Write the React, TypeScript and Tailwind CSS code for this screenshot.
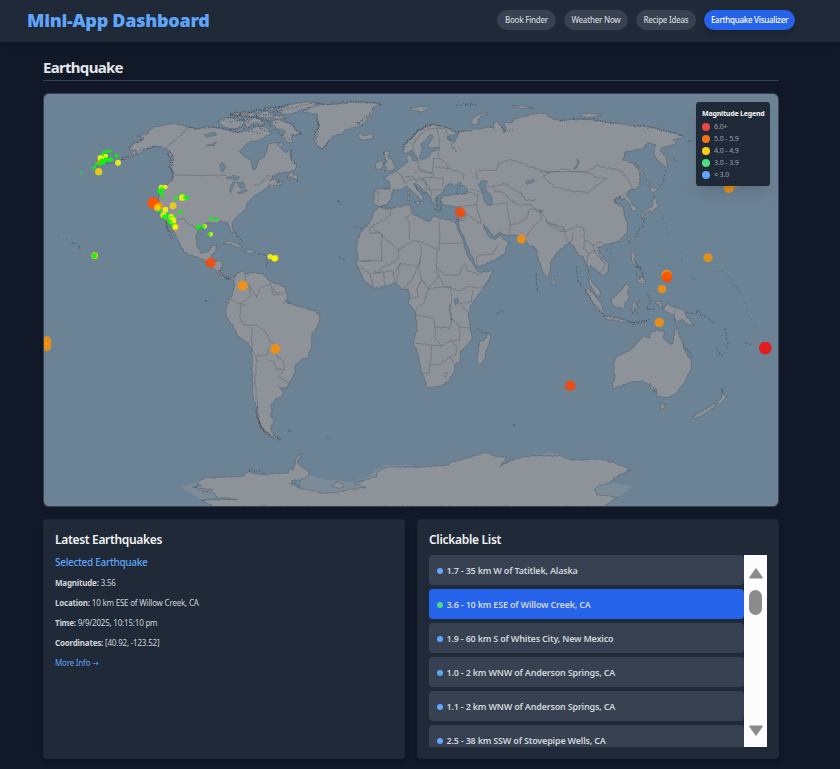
import React from "react";

// A trace is a run of points in thirds of a pixel, measured from an anchor on the page.
type Run = [number, number, string];
type Pt = [number, number];

const A: Pt = [40, 90];
const B: Pt = [230, 90];
const C: Pt = [160, 270];
const E: Pt = [350, 90];
const F: Pt = [540, 90];
const H: Pt = [350, 220];
const I: Pt = [540, 270];

const at = (o: Pt, pts: string): Run => [o[0], o[1], pts];

function points(runs: Run[]): Pt[] {
  const out: Pt[] = [];
  runs.forEach(([ox, oy, s]) =>
    s.trim().split(/\s+/).forEach((p) => {
      const [x, y] = p.split(",").map(Number);
      out.push([ox + x / 3, oy + y / 3]);
    })
  );
  return out;
}

function noise(n: number) {
  const v = Math.sin(n * 127.1 + 11.7) * 43758.5453;
  return v - Math.floor(v) - 0.5;
}

// Breaks each edge into short uneven steps so coasts look ragged.
function rough(runs: Run[], closed: boolean, amp: number) {
  const p = points(runs);
  let d = "";
  const n = closed ? p.length : p.length - 1;
  for (let i = 0; i < n; i++) {
    const a = p[i];
    const b = p[(i + 1) % p.length];
    const len = Math.hypot(b[0] - a[0], b[1] - a[1]);
    const steps = Math.max(1, Math.round(len / 1.8));
    for (let k = 0; k < steps; k++) {
      const t = k / steps;
      const j = k === 0 ? 0 : amp;
      const x = a[0] + (b[0] - a[0]) * t + noise(i * 31 + k + a[0]) * j;
      const y = a[1] + (b[1] - a[1]) * t + noise(i * 17 + k * 3 + a[1]) * j;
      d += (d ? "L" : "M") + x.toFixed(1) + " " + y.toFixed(1);
    }
  }
  if (closed) return d + "Z";
  const e = p[p.length - 1];
  return d + "L" + e[0].toFixed(1) + " " + e[1].toFixed(1);
}

const land: Run[][] = [
  // North and Central America
  [
    at(A, "268,178 280,160 305,152 312,143 292,138 325,130 330,118 365,106 395,101 415,104 450,113 480,115 510,110 550,117 575,124 600,126 630,118 655,108 680,112 690,124"),
    at(B, "125,128 105,140 88,150 60,155 42,168 28,185 42,198 63,210 66,232 74,240 80,228 86,210 104,200 110,182 114,165 130,158 148,160 155,178 166,188 180,180 182,208 200,224 195,240 172,246 148,248 132,258 118,272 135,268 142,276 160,278 124,293 118,284 100,303 72,318 52,338 48,358 15,385 6,400 9,430 2,425 -4,402"),
    at(A, "558,396 540,393 530,402 500,398 478,412 468,440 470,465 485,490 505,485 515,467 532,465 527,485 515,495 518,512 545,512 547,525 540,540 550,560 565,565 580,558 585,572 572,566 550,568 530,545 515,527 490,508 465,500 430,485 422,465 412,445 398,420 386,398 376,392 382,414 398,445 392,444 378,415 372,390 362,372 355,345 358,315 362,295 380,285 398,268 402,245 388,228 396,205 386,190 380,175 350,168 320,175 300,190 270,203 242,210 262,197 290,182"),
  ],
  // South America
  [at(C, "222,25 235,8 250,2 255,12 280,8 310,12 330,35 350,42 375,50 382,75 378,95 400,105 430,112 460,122 478,135 478,155 465,180 455,190 455,230 443,262 425,268 405,285 405,305 385,345 375,355 358,350 370,368 365,380 345,388 340,402 332,405 335,425 332,435 343,452 335,465 333,480 345,498 362,508 345,508 320,495 300,470 292,440 290,410 280,385 278,330 276,270 275,235 265,220 235,200 220,170 200,140 197,125 205,90 218,70 224,45")],
  // Greenland
  [at(B, "218,65 245,52 275,43 305,45 355,36 425,38 455,42 430,52 430,66 412,85 402,100 385,110 350,118 335,130 310,138 290,160 278,176 262,168 252,150 255,130 268,110 262,90 262,72 240,70")],
  // Europe and Asia
  [
    at(E, "158,185 160,165 185,145 200,125 225,112 250,103 285,112 320,125 316,134 298,137 290,145 312,158 325,130 345,120 360,125 375,115 385,118 410,112 432,115 430,98 440,92 455,110 460,128 468,120 462,100 485,98 495,85 525,78 565,70"),
    at(F, "0,68 20,72 35,85 60,92 90,87 110,90 150,88 190,95 230,100 290,108 340,112 380,122 430,138 420,145 400,150 410,158 385,168 365,172 360,180 380,205 382,235 350,210 342,190 348,165 330,158 315,165 310,178 285,180 255,185 248,210 275,218 298,240 300,285 288,298 272,300 258,318 268,320 275,340 290,355 288,362 275,360 270,342 255,325 245,330 240,318 220,330 235,342 248,350 252,370 262,400 260,430 245,445 225,458 200,462 190,468 172,472 190,505 205,520 205,540 190,558 175,545 162,535 152,525 146,548 155,575 170,590 180,605 180,622 165,610 150,585 145,560 142,530 130,500 117,497 105,475 90,458 75,465 50,490 32,515 30,545 24,566 12,550 0,518"),
    at(E, "560,480 550,468 535,465 525,440 490,435 460,435 450,425 430,440 415,418 400,402 404,418 418,440 435,450 450,435 475,458 465,490 430,512 382,532 370,510 345,450 330,418 325,400 330,370 325,350 300,348 278,345 272,325 290,316 320,312 345,312 352,300 330,285 332,276 308,288 300,280 285,290 278,308 262,318 255,325 262,348 250,342 240,320 225,305 205,285 192,280 200,298 220,322 210,336 206,322 185,302 170,288 155,298 130,298 125,320 110,345 88,350 72,340 75,298 100,295 120,298 118,275 100,262 130,250 150,235 165,222 175,215 170,200 185,196 188,212 205,212 202,203 192,190 182,182 168,190"),
  ],
  // Africa
  [
    at(E, "88,350 75,362 65,385 50,410 30,430 22,450 20,480 25,500 18,520 30,545 45,575"),
    at(H, "75,205 110,198 135,190 150,200 155,208 175,205 180,225 175,250 195,275 202,320 190,370 205,405 215,455 228,490 232,503 275,498 300,475 315,450 315,432 332,425 330,395 345,380 365,358 362,325 355,290 360,260 385,225 415,185 430,150 392,158"),
    at(E, "384,546 365,515 350,490 340,455 325,420 312,395 325,388 300,392 270,385 250,378 240,395 215,385 185,370 182,345 140,350 110,358"),
  ],
  // Madagascar, Australia and Oceania
  [at(H, "418,338 422,355 400,425 390,433 380,425 385,400 388,365 405,358")],
  [at(I, "228,262 250,250 275,238 290,218 310,198 330,205 335,185 350,180 373,183 370,205 390,222 400,218 405,180 410,172 418,200 428,215 430,235 455,275 453,300 435,335 405,375 385,382 350,380 348,355 335,360 330,345 310,333 280,335 240,348 220,355 218,345 225,320 220,285")],
  [at(I, "360,402 378,402 372,415 361,420")],
  [at(I, "545,358 552,375 562,378 540,402 532,398 545,382")],
  [at(I, "525,400 528,408 490,434 462,447 458,440 490,422")],
  [at(I, "344,96 362,95 370,115 380,102 405,110 432,122 440,140 464,168 440,160 425,148 410,157 398,132 375,122")],
  [at(I, "213,85 225,80 240,65 258,40 270,50 262,65 268,80 255,98 250,117 220,108")],
  [at(I, "130,48 150,60 185,102 192,130 178,125 150,85")],
  [at(I, "190,137 220,140 250,148 285,158 255,156 200,148")],
  [at(I, "278,98 300,92 284,102 296,112 288,115 294,130 286,126 284,112 278,132 276,112")],
  // Japan, Sakhalin, Philippines and neighbours
  [at(F, "342,318 350,330 354,352 338,362 322,366 312,374 306,388 300,378 322,358 338,346")],
  [at(F, "330,290 355,298 342,308 332,304")],
  [at(F, "285,218 298,230 310,255 328,285 322,285 302,250")],
  [at(F, "266,436 272,445 268,460 263,450")],
  [at(F, "200,478 212,478 206,488")],
  [at(F, "273,486 283,488 282,510 300,532 290,530 274,512")],
  [at(F, "292,572 305,560 316,570 312,585 300,580")],
  [at(F, "35,556 47,574 38,585")],
  // British Isles and Iceland
  [at(B, "462,185 480,184 474,198 486,212 496,232 488,240 462,243 472,232 464,228 472,216 462,206")],
  [at(B, "438,220 450,210 459,218 456,234 438,238")],
  [at(B, "383,138 392,132 402,137 428,132 432,142 408,151 390,147")],
  // Arctic islands
  [at(B, "118,96 145,88 165,96 185,102 196,120 215,130 195,138 182,134 188,158 172,156 156,142 166,124 140,116")],
  [at(B, "140,60 175,45 230,36 272,40 240,52 205,62 185,74 160,72")],
  [at(B, "0,70 30,66 42,74 20,80")],
  [at(B, "40,98 58,92 68,104 52,114")],
  [at(B, "74,92 98,90 104,104 86,108")],
  [at(B, "104,80 150,76 170,84 140,88")],
  [at(B, "100,52 128,50 134,58 108,60")],
  [at(A, "533,96 556,82 590,84 612,96 606,112 580,118 550,110")],
  [at(A, "612,88 640,82 668,90 660,102 630,104")],
  [at(A, "575,72 610,66 640,70 655,80 620,80")],
  [at(B, "75,74 105,64 135,70 128,82 96,86")],
  [at(B, "150,158 162,162 154,170 142,166")],
  [at(E, "360,100 375,78 412,66 414,70 384,86 388,102 370,102")],
  [at(E, "184,54 205,50 240,48 232,58 210,66 192,62")],
  [at(E, "486,46 510,46 552,55 520,56")],
  [at(F, "120,73 145,70 184,74 160,82 132,80")],
  [at(B, "170,262 185,243 190,254 203,256 203,271 188,266")],
  [at(A, "550,461 566,452 590,460 608,472 590,472 572,462")],
  [at(A, "612,486 626,477 646,488 628,491")],
  // Sicily, Sardinia, Corsica, Crete, Cyprus
  [at(E, "192,336 210,336 206,345")],
  [at(E, "172,318 180,318 179,332 173,332")],
  [at(E, "174,302 179,303 178,314 174,312")],
  [at(E, "252,358 275,360 270,363")],
  // Antarctica
  [
    at(C, "165,710 122,690 232,688 172,682 164,670 125,664 160,660 100,652 125,648 110,640 130,625 245,619 265,605 290,613 385,610 388,595 400,600 410,560 425,550 412,580 445,605 445,618 425,628 395,632 395,642 420,655 500,671 618,652 582,640 630,626 650,620 655,604 690,590 778,592"),
    at(H, "230,740 290,735 310,725 345,716 405,697 435,708 470,712 450,740 500,715 570,705"),
    at(I, "0,557 65,558 90,570 180,567 225,580 272,600 235,615 205,640 175,648 163,658 170,675 232,682 190,710"),
  ],
  [at(C, "515,650 530,636 548,640 550,654 532,654")],
];

const water: Run[][] = [
  [at(E, "216,180 214,160 230,146 240,135 250,138 244,150 233,165 245,174 268,172 262,180 245,184 240,198 222,208 208,206")],
  [at(E, "384,284 398,271 414,274 404,286 412,305 426,318 427,345 412,346 402,336 400,312")],
  [at(E, "318,312 325,290 340,285 354,300 350,312")],
  [at(F, "100,237 112,222 112,206 119,218 108,236")],
  [at(H, "312,238 325,235 326,248 316,255")],
  [at(A, "558,265 578,256 600,262 590,270")],
  [at(A, "578,276 586,274 572,308 568,300")],
  [at(A, "590,276 608,276 616,290 604,298 596,290")],
  [at(A, "592,308 620,298 622,303 598,312")],
  [at(A, "540,222 548,218 556,228 550,246 542,242")],
  [at(A, "492,134 525,127 530,134 500,142")],
  [at(A, "498,168 530,156 522,168")],
  [at(E, "527,275 552,268 553,274 532,284")],
];

const shelves: Run[][] = [
  [at(C, "65,652 128,628 100,652 160,660 170,680 122,690")],
  [at(C, "420,655 425,630 445,615 500,630 585,636 620,652 500,671")],
  [at(C, "552,640 590,630 630,618 645,602 662,592 655,604 650,620")],
  [at(H, "60,775 80,752 110,735 200,736 105,744 85,770")],
  [at(I, "165,652 205,640 280,648 232,682 170,675")],
  [at(I, "0,555 25,545 70,558")],
];

const borders: Run[][] = [
  [at(A, "380,172 448,112")],
  [at(A, "402,256 552,256 570,262")],
  [at(A, "386,384 412,390 430,385 445,402 458,406 470,420")],
  [at(B, "74,286 88,284 100,270 118,262")],
  [at(C, "255,15 255,40 270,50 270,80 245,100 240,140 250,165 290,165 325,195 330,215 345,220")],
  [at(C, "270,50 290,82 300,55 330,40 340,75 378,70")],
  [at(C, "205,85 235,100 262,105")],
  [at(C, "275,175 276,240 290,260 285,330 292,410 300,470 330,495")],
  [at(C, "290,258 320,255 325,235 345,238 348,255 372,275 372,300 348,298 345,280 322,268")],
  [at(C, "372,300 358,318 385,340")],
  [at(C, "340,50 345,70 360,65")],
  // Europe
  [at(E, "118,298 100,295")],
  [at(E, "76,304 86,306 84,335")],
  [at(E, "140,245 160,262 162,280 185,268 215,270 225,262 250,262 280,265 278,290")],
  [at(E, "205,215 205,235 215,245 245,250 250,228 250,205 270,205 290,220 295,235 255,232")],
  [at(E, "192,248 220,240 250,250 240,265")],
  [at(E, "295,235 340,252 340,268")],
  [at(E, "190,190 188,165 205,140 230,118 262,115 268,165 265,200")],
  [at(E, "262,115 285,115 300,150")],
  [at(E, "205,262 230,275 228,300 245,300 280,298")],
  [at(E, "218,275 240,290 245,320")],
  [at(E, "165,262 190,260 200,275")],
  [at(E, "350,305 385,315 380,345 392,400 375,390 350,370 330,378")],
  [at(E, "378,345 325,350")],
  [at(E, "380,532 380,500 430,490 445,462")],
  [at(E, "350,370 340,392 325,395 345,375")],
  [at(E, "360,298 385,302 400,310")],
  // Central and East Asia
  [at(E, "385,272 376,250 385,240 440,240 445,222 480,208 520,220 540,230 565,238 600,250")],
  [at(E, "405,290 430,288 435,305 460,308 480,330 510,345 545,345 565,365 580,360")],
  [at(E, "430,288 470,280 490,300 515,310 525,330 560,330")],
  [at(E, "428,345 470,338 475,370 480,405 505,400 530,385 540,355 580,365")],
  [at(E, "480,405 478,435")],
  [at(E, "530,440 550,410 575,385 570,360")],
  [at(F, "0,245 50,245 70,235 100,245 140,245 175,225 185,232 240,240 265,270 275,290 280,300")],
  [at(F, "10,258 40,290 100,305 145,308 165,290 180,280 200,265 170,262 150,250 100,245 35,245 10,258")],
  [at(F, "0,358 20,395 60,415 80,425 110,408 130,415 135,450 160,465 180,455 190,465")],
  [at(F, "20,400 50,420 75,425 72,412 45,405 20,398")],
  [at(F, "75,425 80,455 95,455 100,430")],
  [at(F, "135,450 130,475 145,490 140,520 148,540")],
  [at(F, "145,490 170,480 195,520 185,545")],
  [at(F, "160,465 165,490 190,515")],
  [at(F, "245,318 275,298")],
  // Africa
  [at(E, "88,350 122,352 122,375 100,390 60,412 60,430 95,430 95,512 32,512")],
  [at(E, "70,415 145,480 195,450 268,480 268,460 268,388")],
  [at(E, "182,372 168,385 178,400 180,450")],
  [at(E, "268,460 340,460")],
  [at(E, "145,480 145,505 120,525 100,530 85,550 72,545")],
  [at(E, "200,455 215,475 210,520 200,528 150,520 130,555")],
  [at(E, "262,480 260,530 285,555 325,555 345,520")],
  [at(E, "345,520 350,540 385,555")],
  [at(H, "62,120 45,125 20,120")],
  [at(H, "20,140 42,148 60,160 68,200")],
  [at(H, "68,160 100,155 105,198")],
  [at(H, "100,155 130,155 135,188")],
  [at(H, "150,130 145,160 140,188")],
  [at(H, "160,205 185,180 205,140 210,120")],
  [at(H, "205,140 215,180 235,205 265,170 260,140")],
  [at(H, "215,180 200,210 205,230 180,235")],
  [at(H, "235,205 225,245 200,265 195,275")],
  [at(H, "235,205 300,200 305,240 300,270 305,300 300,325 255,322 250,295 200,285")],
  [at(H, "265,165 285,200 330,212 350,200 395,205 415,180")],
  [at(H, "370,210 365,245 330,250")],
  [at(H, "330,255 355,275")],
  [at(H, "300,295 330,320 362,325")],
  [at(H, "328,320 330,360 300,362 275,378 245,375 190,370")],
  [at(H, "245,375 240,435 238,458 215,460")],
  [at(H, "240,435 275,430 300,410 318,405 320,378 300,362")],
  [at(H, "300,410 310,430")],
  [at(H, "279,464 285,457 293,462 288,472 280,470")],
  [at(H, "255,322 255,355 275,378")],
  [at(I, "404,110 404,154")],
];

// Rugged coasts drawn as loose dark specks.
const specks: Run[][] = [
  [at(A, "390,185 400,205 392,230 402,260 395,268")],
  [at(A, "384,190 392,215 386,235")],
  [at(A, "388,180 398,195 398,225 394,245")],
  [at(A, "245,208 275,198 300,186")],
  [at(A, "250,204 285,190 318,176 350,170")],
  [at(A, "268,176 282,160 306,150")],
  [at(A, "232,212 205,220 180,224 165,232")],
  [at(A, "96,460 108,462")],
  [at(A, "116,470 123,482")],
  [at(A, "585,425 592,440 602,448 612,458")],
  [at(A, "655,492 675,495 681,505 680,530")],
  [at(A, "540,540 552,560 570,570")],
  [at(A, "375,395 384,418 396,442")],
  [at(A, "570,76 620,70 670,60 750,45")],
  [at(A, "535,96 570,84 612,92 640,84 690,90")],
  [at(A, "450,113 480,117 520,112 560,120 600,127")],
  [at(A, "600,74 640,78 690,70 730,62")],
  [at(B, "0,72 50,68 90,60 140,50 185,42")],
  [at(B, "0,95 40,88 70,100 110,92 140,100")],
  [at(B, "20,76 60,80 90,84 120,72 160,78")],
  [at(B, "30,100 60,112 85,108 115,100 125,112")],
  [at(B, "90,115 120,125 140,120 160,140 180,150")],
  [at(B, "0,118 30,110 50,122 95,130")],
  [at(B, "165,96 190,104 200,122 214,130 190,138")],
  [at(B, "140,62 180,56 220,46 270,40")],
  [at(B, "262,85 270,105 256,130 258,160")],
  [at(B, "266,92 264,110 262,140 254,150")],
  [at(B, "262,168 278,176 292,158")],
  [at(B, "428,55 418,75 400,85 380,105")],
  [at(B, "412,82 392,94 376,98 398,104")],
  [at(B, "275,43 310,40 360,35 420,38 455,42")],
  [at(B, "110,258 130,256 150,278 122,290")],
  [at(B, "184,180 184,210 200,225")],
  [at(B, "172,262 190,264 204,270")],
  [at(B, "322,333 340,342")],
  [at(B, "376,412 400,412")],
  [at(B, "328,500 342,514")],
  [at(B, "460,188 466,208 462,218")],
  [at(E, "160,180 163,163 188,143 203,122 228,108 250,102 268,106")],
  [at(E, "158,170 180,150 196,128 220,112 245,104")],
  [at(E, "190,282 210,300 226,312")],
  [at(E, "255,330 265,350 278,355")],
  [at(E, "262,322 272,335 276,350")],
  [at(E, "318,46 350,42 388,45")],
  [at(E, "345,45 370,44")],
  [at(E, "270,108 320,126 345,122")],
  [at(E, "298,148 306,168 318,186")],
  [at(E, "455,112 470,125 490,120")],
  [at(E, "560,550 562,605")],
  [at(C, "292,412 293,445 305,475 330,498 360,510")],
  [at(C, "288,420 300,468 322,490 355,506")],
  [at(C, "296,455 312,484 336,500")],
  [at(C, "384,482 396,484")],
  [at(C, "372,100 380,90 392,98")],
  [at(C, "175,0 182,18 200,28 215,22")],
  [at(C, "268,602 292,602 318,608")],
  [at(C, "388,640 410,642 425,650")],
  [at(C, "500,500 516,502")],
  [at(C, "135,92 146,95")],
  [at(F, "376,240 372,268 360,290")],
  [at(F, "312,385 310,410 285,440")],
  [at(F, "285,515 300,545 312,560")],
  [at(F, "288,528 304,540 308,560")],
  [at(F, "110,530 112,560 125,590")],
  [at(F, "455,565 470,570")],
  [at(F, "400,209 415,213")],
  [at(F, "445,152 456,153")],
  [at(F, "60,92 90,88 150,88 190,96 230,101")],
  [at(F, "280,108 340,114 400,130 432,140")],
  [at(F, "240,318 222,332 240,348")],
  [at(I, "135,60 160,98 186,130")],
  [at(I, "192,138 240,148 300,158 330,150")],
  [at(I, "278,165 320,150")],
  [at(I, "440,128 470,130 475,118")],
  [at(I, "470,125 500,140 526,162")],
  [at(I, "320,70 330,100 320,118 345,118")],
  [at(I, "290,10 300,30 315,38")],
  [at(I, "555,175 560,205 562,235")],
  [at(I, "530,235 548,262")],
  [at(I, "615,218 635,225")],
  [at(I, "430,225 445,245 460,262")],
  [at(I, "330,340 340,350 345,370")],
  [at(I, "546,358 550,372")],
  [at(H, "380,325 400,340 415,335")],
  [at(H, "440,280 462,272")],
  [at(H, "298,255 300,290 306,300")],
  [at(H, "490,612 500,616")],
];

// Scattered atolls, too small to show more than a faint dot.
const atolls: Run[][] = [
  [at(F, "357,362 375,400 390,450")],
  [at(F, "524,542 560,550 575,580 600,610")],
  [at(F, "425,485 424,520")],
  [at(I, "575,30 595,60 630,140 650,180")],
  [at(A, "55,437 86,452 116,470")],
];

type Dot = [Pt, number, number, number, string];
const G = "#00ff00";
const Y = "#ffff00";
const YO = "#ffd500";
const O = "#ff9100";

const quakes: Dot[] = [
  [A, 123, 248, 3.5, G],
  [A, 180, 215, 9, O],
  [A, 181, 203, 8, Y],
  [A, 190, 200, 8, Y],
  [A, 198, 198, 6.5, Y],
  [A, 201, 184, 5.5, G],
  [A, 211, 184, 4.5, G],
  [A, 192, 187, 4.5, G],
  [A, 188, 194, 5, G],
  [A, 230, 197, 6, G],
  [A, 234, 218, 9, Y],
  [A, 189, 214, 8, G],
  [A, 190, 218, 6, G],
  [A, 198, 208, 7, G],
  [A, 205, 209, 5, G],
  [A, 212, 209, 7.5, G],
  [A, 184, 210, 5, G],
  [A, 181, 221, 6, G],
  [A, 170, 222, 5, G],
  [A, 165, 230, 4, G],
  [A, 159, 235, 4, G],
  [A, 176, 245, 11, YO],
  [A, 364, 292, 8, Y],
  [A, 376, 291, 7, Y],
  [A, 366, 296, 6, G],
  [A, 358, 303, 6.5, G],
  [A, 363, 309, 6.5, G],
  [A, 368, 318, 4.5, G],
  [A, 340, 339, 18, "#ff5500"],
  [A, 340, 339, 16, "#ff5500"],
  [A, 358, 348, 11, O],
  [A, 352, 353, 10, YO],
  [A, 399, 347, 10.5, YO],
  [A, 376, 359, 8.5, Y],
  [A, 408, 325, 6, G],
  [A, 425, 315, 6, G],
  [A, 427, 323, 9.5, Y],
  [A, 434, 322, 5, G],
  [A, 440, 323, 6.5, G],
  [A, 422, 365, 6, G],
  [A, 361, 364, 5.5, G],
  [A, 370, 376, 9, Y],
  [A, 376, 381, 8, G],
  [A, 371, 380, 5, G],
  [A, 385, 373, 4.5, G],
  [A, 394, 381, 9, Y],
  [A, 393, 384, 6, G],
  [A, 404, 378, 4.5, G],
  [A, 398, 392, 11, Y],
  [A, 389, 395, 7, G],
  [A, 399, 405, 7, G],
  [A, 406, 412, 9.5, YO],
  [A, 406, 410, 7, Y],
  [A, 475, 412, 7.5, G],
  [A, 494, 409, 7, Y],
  [A, 490, 409, 5.5, G],
  [A, 514, 386, 5.5, G],
  [A, 529, 388, 5.5, G],
  [A, 512, 433, 7, Y],
  [A, 507, 433, 5, G],
  [A, 164, 497, 10, YO],
  [A, 163, 497, 7.5, G],
  [A, 163, 497, 6, G],
  [A, 690, 500, 8, Y],
  [A, 706, 504, 10, YO],
  [A, 703, 506, 8.5, Y],
  [A, 512, 518, 15.5, "#ff4400"],
  [A, 608, 587, 15, O],
  [C, 346, 237, 15, O],
  [E, 331, 367, 15.5, "#ff4400"],
  [E, 514, 447, 13.5, O],
  [F, 567, 294, 15, O],
  [F, 585, 282, 10, O],
  [F, 504, 503, 13.5, O],
  [F, 380, 555, 16, O],
  [F, 381, 562, 16, "#ff4400"],
  [F, 380, 557, 12, "#ff5500"],
  [F, 366, 597, 13, O],
  [I, 358, 157, 14, O],
  [I, 676, 234, 19, "#ff0505"],
  [I, 91, 347, 16, "#ff4400"],
  [A, 20, 753, 14, O],
  [A, 20, 769, 14, O],
];

function WorldMap() {
  return (
    <svg viewBox="44 94 734 412" className="block h-full w-full" preserveAspectRatio="none">
      <g fill="#7b8c98">
        {shelves.map((r, i) => (
          <path key={i} d={rough(r, true, 0.5)} />
        ))}
      </g>
      <g fill="#8e939a" stroke="#353d46" strokeOpacity=".6" strokeWidth=".5">
        {land.map((r, i) => (
          <path key={i} d={rough(r, true, 1.5)} />
        ))}
      </g>
      <g fill="#6c8395" stroke="#353d46" strokeOpacity=".5" strokeWidth=".5">
        {water.map((r, i) => (
          <path key={i} d={rough(r, true, 1.1)} />
        ))}
      </g>
      <g fill="none" stroke="#3b424a" strokeOpacity=".6" strokeWidth=".5">
        {borders.map((r, i) => (
          <path key={i} d={rough(r, false, 1.4)} />
        ))}
      </g>
      <g fill="none" stroke="#1b222b" strokeOpacity=".7" strokeWidth=".8" strokeDasharray="1.3 1.4 .7 2">
        {specks.map((r, i) => (
          <path key={i} d={rough(r, false, 2.6)} />
        ))}
      </g>
      <g fill="none" stroke="#1b222b" strokeOpacity=".45" strokeWidth=".8" strokeDasharray=".9 5 .6 3">
        {atolls.map((r, i) => (
          <path key={i} d={rough(r, false, 2)} />
        ))}
      </g>
      {quakes.map(([o, x, y, r, c], i) => (
        <circle key={i} cx={o[0] + x / 3} cy={o[1] + y / 3} r={r / 3} fill={c} fillOpacity=".82" />
      ))}
    </svg>
  );
}

const tabs = [
  { label: "Book Finder", style: "w-[59px] bg-[#374151] text-[#d1d5db]" },
  { label: "Weather Now", style: "w-16 bg-[#374151] text-[#d1d5db]" },
  { label: "Recipe Ideas", style: "w-[60px] bg-[#374151] text-[#d1d5db]" },
  { label: "Earthquake Visualizer", style: "w-[91px] bg-[#2563eb] text-white shadow-md" },
];

const legend = [
  { label: "6.0+", dot: "bg-[#ef4444]" },
  { label: "5.0 - 5.9", dot: "bg-[#f97316]" },
  { label: "4.0 - 4.9", dot: "bg-[#facc15]" },
  { label: "3.0 - 3.9", dot: "bg-[#4ade80]" },
  { label: "< 3.0", dot: "bg-[#60a5fa]" },
];

const rows = [
  { text: "1.7 - 35 km W of Tatitlek, Alaska", tone: "bg-[#374151]", dot: "bg-[#60a5fa]" },
  { text: "3.6 - 10 km ESE of Willow Creek, CA", tone: "bg-[#2563eb]", dot: "bg-[#4ade80]" },
  { text: "1.9 - 60 km S of Whites City, New Mexico", tone: "bg-[#374151]", dot: "bg-[#60a5fa]" },
  { text: "1.0 - 2 km WNW of Anderson Springs, CA", tone: "bg-[#374151]", dot: "bg-[#60a5fa]" },
  { text: "1.1 - 2 km WNW of Anderson Springs, CA", tone: "bg-[#374151]", dot: "bg-[#60a5fa]" },
  { text: "2.5 - 38 km SSW of Stovepipe Wells, CA", tone: "bg-[#374151]", dot: "bg-[#60a5fa]" },
];

const details = [
  ["Magnitude:", "3.56"],
  ["Location:", "10 km ESE of Willow Creek, CA"],
  ["Time:", "9/9/2025, 10:15:10 pm"],
  ["Coordinates:", "[40.92, -123.52]"],
];

export default function App() {
  return (
    <div className="flex h-[769px] w-[840px] flex-col overflow-hidden bg-[#111827] font-['Noto_Sans',sans-serif] text-[#e5e7eb]">
      <header className="flex h-[42px] shrink-0 items-start justify-between bg-[#1f2937] pr-[45px] pl-[27px] shadow-md">
        <h1 className="pt-2 text-[18px] leading-6 font-black tracking-[-0.27px] whitespace-nowrap text-[#60a5fa]">Mini-App Dashboard</h1>
        <nav className="flex gap-2 pt-[10px]">
          {tabs.map((t) => (
            <button key={t.label} className={"flex h-5 items-center justify-center rounded-full text-[8px] font-medium tracking-[-0.27px] whitespace-nowrap " + t.style}>
              {t.label}
            </button>
          ))}
        </nav>
      </header>

      <main className="mr-[18px] flex w-[736px] flex-col self-center pt-4">
        <h2 className="h-[23px] border-b border-[#374151] text-[15px] leading-[19px] font-bold tracking-[-0.7px]">Earthquake</h2>

        <section className="relative mt-3 h-[414px] overflow-hidden rounded-md border border-[#374151] bg-[#6c8395]">
          <WorldMap />
          <aside className="absolute top-2 right-2 flex h-[84px] w-[74px] flex-col rounded-[3px] bg-[#1f2937] pt-[6px] pl-[6px] shadow-lg">
            <h4 className="h-[13px] text-[7px] leading-[11px] font-extrabold tracking-[-0.25px] whitespace-nowrap">Magnitude Legend</h4>
            {legend.map((l) => (
              <div key={l.label} className="flex h-3 items-center gap-1">
                <span className={"size-2 rounded-full " + l.dot} />
                <span className="text-[7px] leading-3 tracking-[-0.1px] text-[#9ca3af]">{l.label}</span>
              </div>
            ))}
          </aside>
        </section>

        <div className="mt-3 grid h-60 grid-cols-2 gap-3">
          <section className="rounded-[4px] bg-[#1f2937] px-3 pt-3 shadow-md">
            <h3 className="text-[12px] leading-[18px] font-semibold tracking-[-0.33px] text-[#f3f4f6]">Latest Earthquakes</h3>
            <h4 className="mt-[5px] text-[10px] leading-4 font-medium tracking-[-0.3px] text-[#60a5fa]">Selected Earthquake</h4>
            <div className="mt-[7px] flex flex-col gap-2 text-[8px] leading-3 tracking-[-0.2px] text-[#d1d5db]">
              {details.map(([k, v]) => (
                <p key={k}>
                  <strong className="font-bold">{k}</strong> {v}
                </p>
              ))}
              <a className="text-[#60a5fa]">
                More Info <span className="font-['DejaVu_Sans']">→</span>
              </a>
            </div>
          </section>

          <section className="rounded-[4px] bg-[#1f2937] p-3 shadow-md">
            <h3 className="text-[12px] leading-[18px] font-semibold tracking-[-0.3px] text-[#f3f4f6]">Clickable List</h3>
            <div className="mt-[6px] flex h-48 overflow-hidden">
              <ul className="flex w-[315px] flex-col gap-1">
                {rows.map((r) => (
                  <li key={r.text} className={"flex h-[30px] shrink-0 items-center gap-[3.5px] rounded-[4px] pt-[2px] pl-2 " + r.tone}>
                    <span className={"size-[6px] rounded-full " + r.dot} />
                    <span className="text-[9px] font-semibold tracking-[-0.2px] whitespace-nowrap text-[#d1d5db]">{r.text}</span>
                  </li>
                ))}
              </ul>
              <div className="flex w-[23px] flex-col items-center bg-[#fcfcfc]">
                <svg viewBox="0 0 14 11" className="mt-[12.5px] h-[11px] w-[14px] shrink-0">
                  <path d="M7 1.2 L13 9.8 H1 Z" fill="#8b8b8b" stroke="#8b8b8b" strokeWidth="1.6" strokeLinejoin="round" />
                </svg>
                <div className="mt-[11.5px] h-[25px] w-[13px] shrink-0 rounded-full bg-[#8b8b8b]" />
                <svg viewBox="0 0 14 11" className="mt-auto mb-[11.5px] h-[11px] w-[14px] shrink-0">
                  <path d="M7 9.8 L13 1.2 H1 Z" fill="#8b8b8b" stroke="#8b8b8b" strokeWidth="1.6" strokeLinejoin="round" />
                </svg>
              </div>
            </div>
          </section>
        </div>
      </main>
    </div>
  );
}
